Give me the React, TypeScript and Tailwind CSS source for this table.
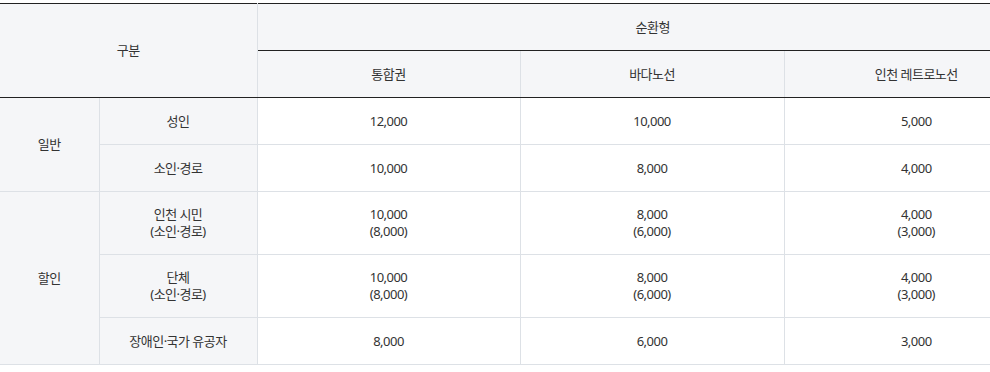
import React from "react";

// 순환형 요금표 (통합권 / 바다노선 / 인천 레트로노선)
interface FareRow {
  group?: { label: string; span: number };
  target: string[];
  fares: string[][];
  tall?: boolean;
}

const rows: FareRow[] = [
  { group: { label: "일반", span: 2 }, target: ["성인"], fares: [["12,000"], ["10,000"], ["5,000"]] },
  { target: ["소인·경로"], fares: [["10,000"], ["8,000"], ["4,000"]] },
  {
    group: { label: "할인", span: 3 },
    target: ["인천 시민", "(소인·경로)"],
    fares: [["10,000", "(8,000)"], ["8,000", "(6,000)"], ["4,000", "(3,000)"]],
    tall: true,
  },
  {
    target: ["단체", "(소인·경로)"],
    fares: [["10,000", "(8,000)"], ["8,000", "(6,000)"], ["4,000", "(3,000)"]],
    tall: true,
  },
  { target: ["장애인·국가 유공자"], fares: [["8,000"], ["6,000"], ["3,000"]] },
];

const Lines: React.FC<{ lines: string[] }> = ({ lines }) => (
  <>
    {lines.map((l, i) => (
      <div key={i} className="leading-[17px]">
        {l}
      </div>
    ))}
  </>
);

export default function App() {
  return (
    <div
      className="w-[990px] h-[372px] overflow-hidden bg-white pt-[3px] text-[13px] leading-[17px] text-[#333] tracking-[-0.04em]"
      style={{ fontFamily: '"Noto Sans", "Noto Sans CJK KR", sans-serif' }}
    >
      <table className="w-[1048px] table-fixed border-collapse text-center">
        <colgroup>
          <col className="w-[99px]" />
          <col className="w-[158px]" />
          <col className="w-[263px]" />
          <col className="w-[264px]" />
          <col className="w-[264px]" />
        </colgroup>
        <thead>
          <tr className="h-[47px] border-t border-[#222]">
            <th
              colSpan={2}
              rowSpan={2}
              className="bg-[#f5f6f8] font-normal border-r border-[#dde1e6] border-b border-b-[#222]"
            >
              구분
            </th>
            <th colSpan={3} className="bg-[#f5f6f8] font-normal border-b border-[#222]">
              순환형
            </th>
          </tr>
          <tr className="h-[47px]">
            <th className="bg-[#f5f6f8] font-normal border-r border-[#dde1e6] border-b border-b-[#222]">통합권</th>
            <th className="bg-[#f5f6f8] font-normal border-r border-[#dde1e6] border-b border-b-[#222]">바다노선</th>
            <th className="bg-[#f5f6f8] font-normal border-b border-[#222]">인천 레트로노선</th>
          </tr>
        </thead>
        <tbody>
          {rows.map((r, i) => (
            <tr key={i} className={r.tall ? "h-[63px]" : "h-[47px]"}>
              {r.group && (
                <td
                  rowSpan={r.group.span}
                  className="bg-[#f5f6f8] border-r border-b border-[#dde1e6]"
                >
                  {r.group.label}
                </td>
              )}
              <td className="bg-[#f5f6f8] border-r border-b border-[#dde1e6]">
                <Lines lines={r.target} />
              </td>
              {r.fares.map((f, j) => (
                <td
                  key={j}
                  className={`border-b border-[#dde1e6] ${j < 2 ? "border-r" : ""}`}
                >
                  <Lines lines={f} />
                </td>
              ))}
            </tr>
          ))}
        </tbody>
      </table>
    </div>
  );
}
